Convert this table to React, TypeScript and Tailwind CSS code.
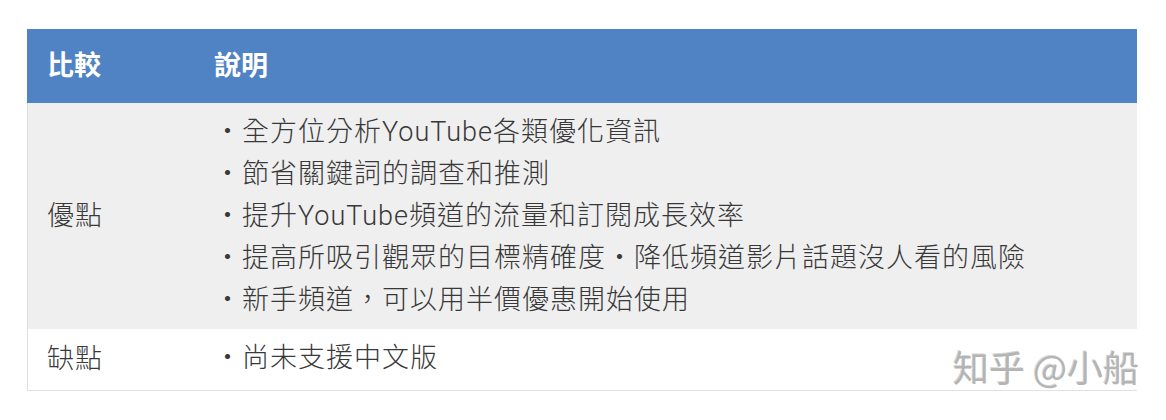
import React from "react";

const pros = [
  "・全方位分析YouTube各類優化資訊",
  "・節省關鍵詞的調查和推測",
  "・提升YouTube頻道的流量和訂閱成長效率",
  "・提高所吸引觀眾的目標精確度・降低頻道影片話題沒人看的風險",
  "・新手頻道，可以用半價優惠開始使用",
];

export default function App() {
  const font = { fontFamily: '"Liberation Sans", "Noto Sans CJK TC", sans-serif' };
  const body = { fontFamily: 'Roboto, "Noto Sans CJK TC", sans-serif' };
  return (
    <div className="relative w-[1166px] h-[420px] bg-white overflow-hidden" style={font}>
      <div className="ml-[27px] mt-[29px] w-[1110px] flex flex-col">
        {/* header */}
        <div className="flex h-[74px] bg-[#4f83c3] text-white font-bold text-[27px] items-center">
          <div className="w-[187px] pl-[20px]">比較</div>
          <div>說明</div>
        </div>
        {/* pros */}
        <div className="flex h-[226px] bg-[#efefef] border-l border-[#dcdcdc] text-[#383838] font-light" style={body}>
          <div className="w-[186px] pl-[19px] flex items-center text-[27px] tracking-[1px]">優點</div>
          <div className="flex flex-col py-[8px] text-[27px] leading-[42px] tracking-[1px]">
            {pros.map((p) => (
              <div key={p}>{p}</div>
            ))}
          </div>
        </div>
        {/* cons */}
        <div className="flex h-[62px] bg-white border-l border-b border-[#e0e0e0] text-[#383838] font-light" style={body}>
          <div className="w-[186px] pl-[19px] flex items-center text-[27px] tracking-[1px]">缺點</div>
          <div className="pt-[8px] text-[27px] leading-[42px] tracking-[1px]">・尚未支援中文版</div>
        </div>
      </div>
      <div
        className="absolute left-[953px] top-[340px] text-[36px] leading-[52px] text-[#b4b4b4] [text-shadow:1px_1px_0_#ffffff,-1px_-1px_0_#d8d8d8]"
        style={{ fontFamily: '"Noto Sans CJK SC", sans-serif' }}
      >
        知乎 @小船
      </div>
    </div>
  );
}
